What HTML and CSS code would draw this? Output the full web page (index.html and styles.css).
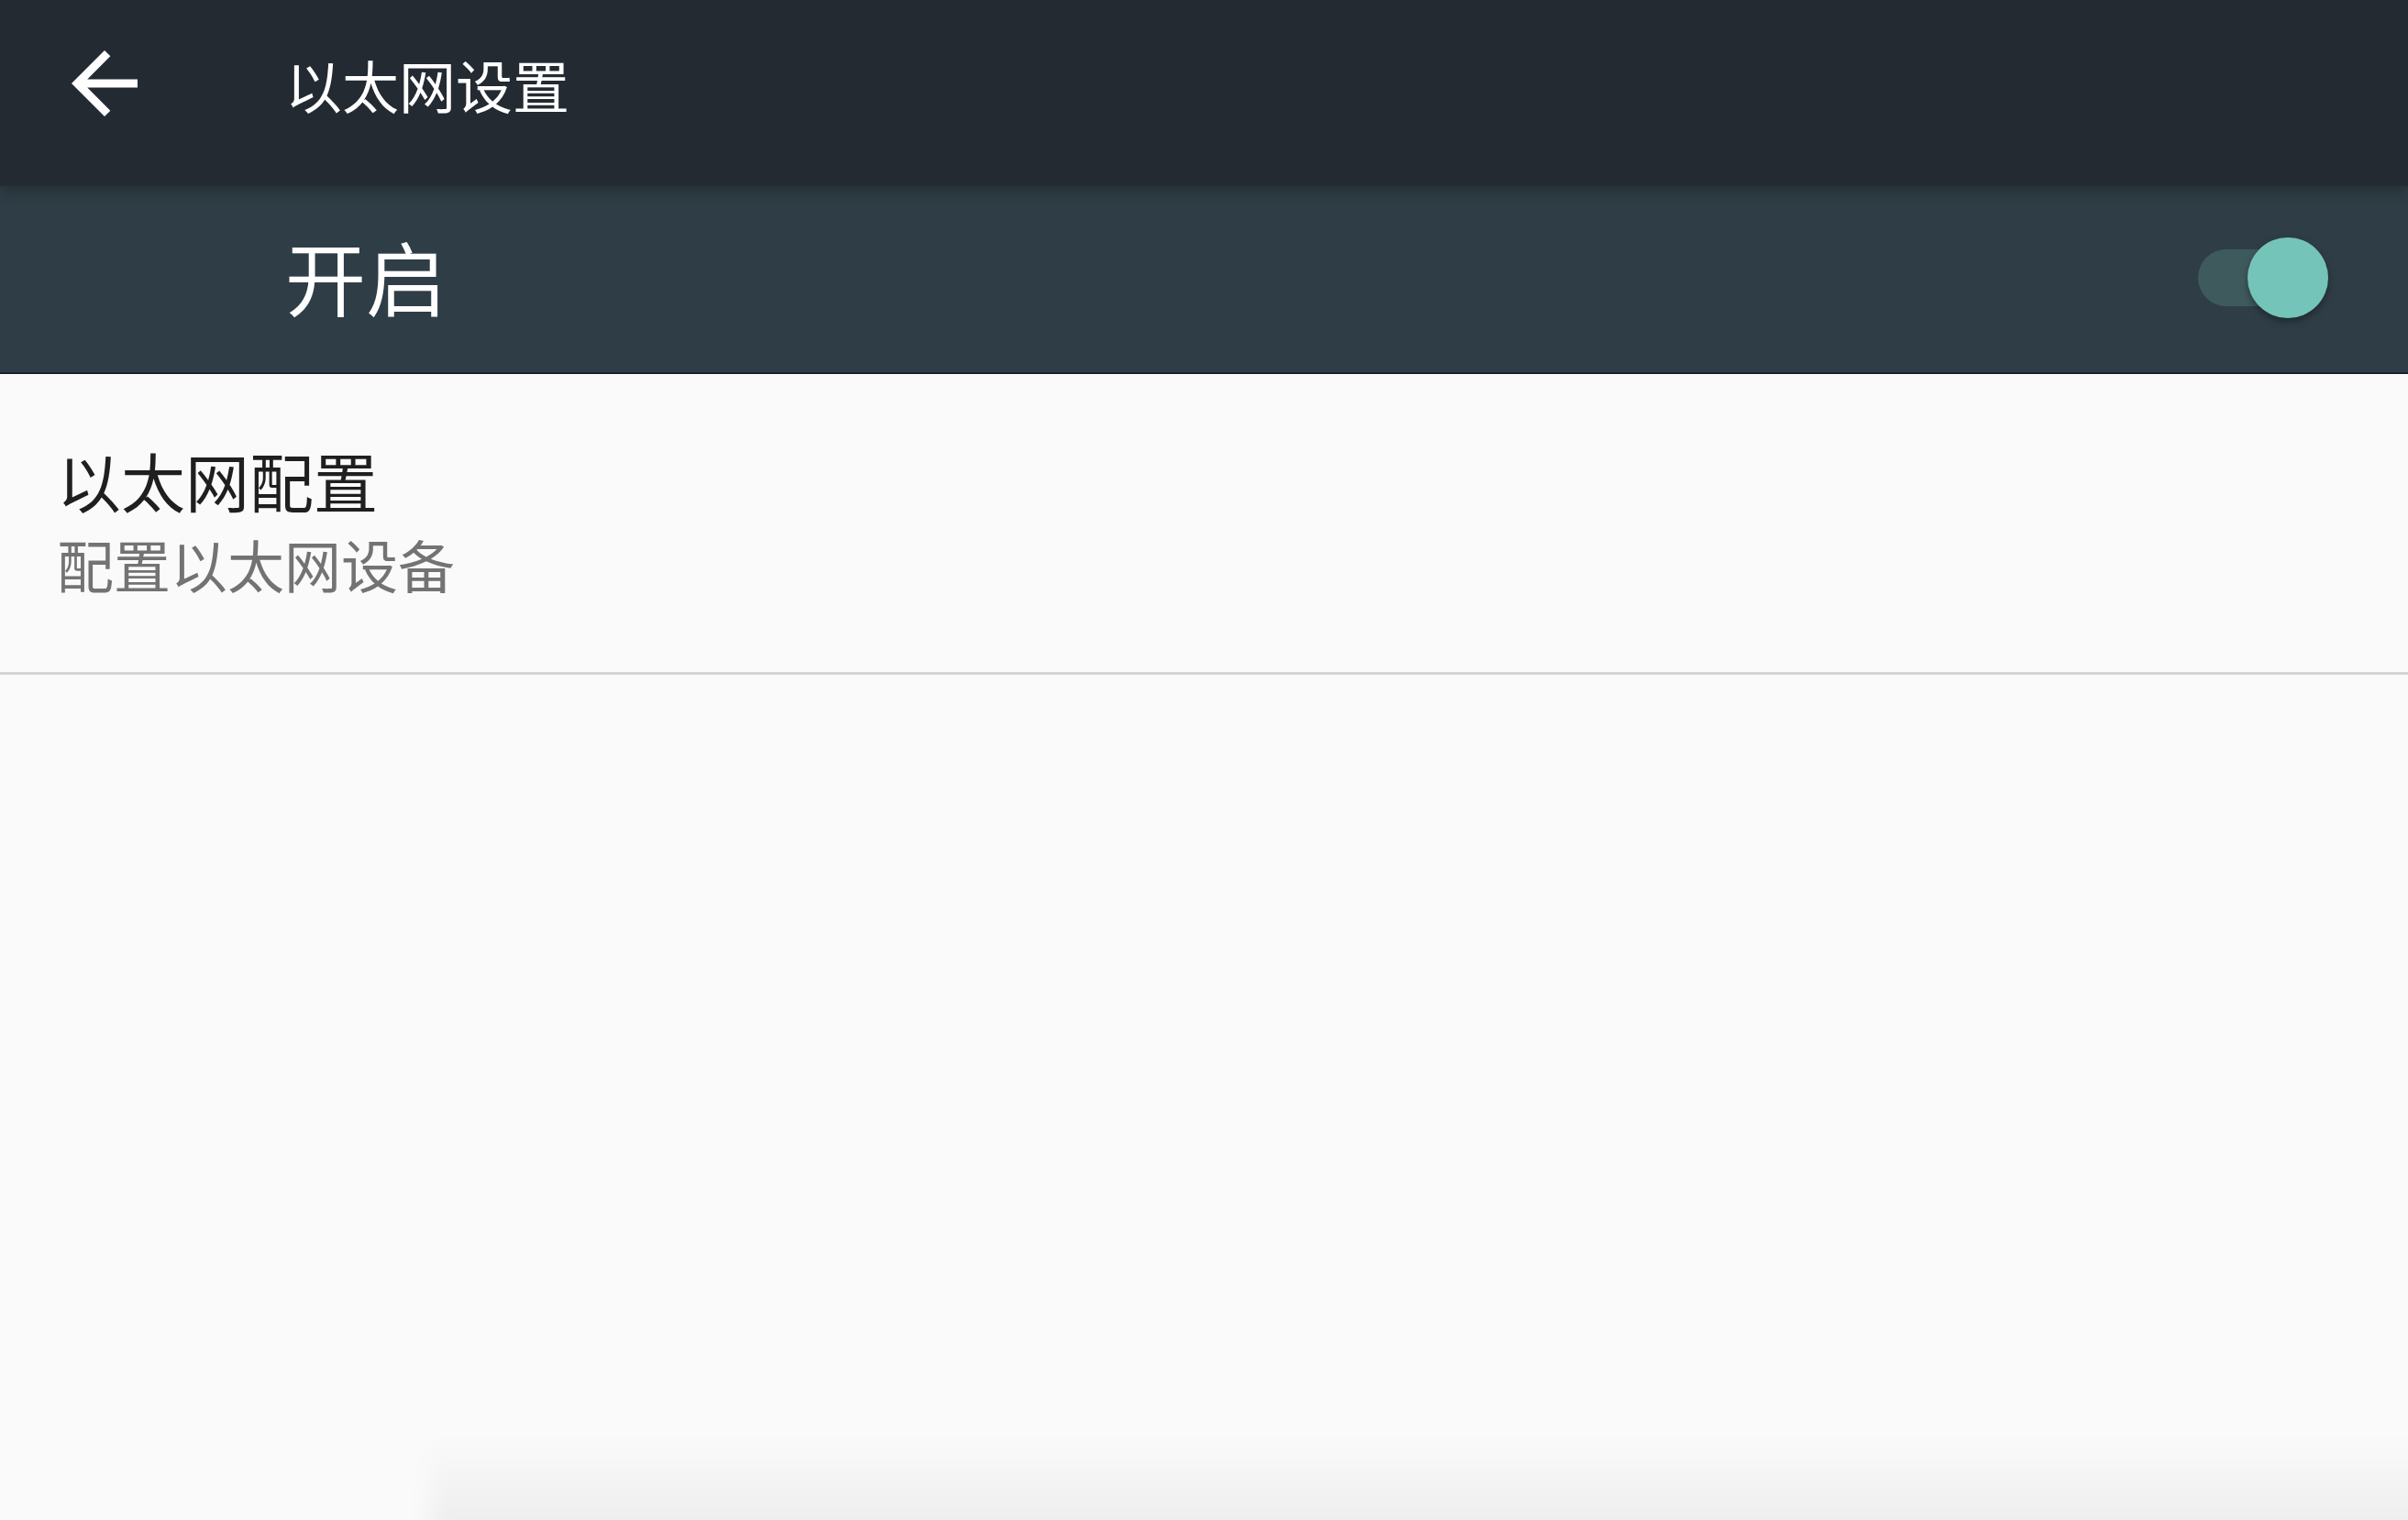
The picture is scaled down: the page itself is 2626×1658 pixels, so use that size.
FILE: index.html
```html
<!DOCTYPE html>
<html lang="zh-CN">
<head>
  <meta charset="UTF-8">
  <title>以太网设置</title>
  <link rel="stylesheet" href="styles.css">
</head>
<body>

  <!-- Toolbar -->
  <header class="toolbar">
    <svg class="back-icon" viewBox="0 0 24 24" width="108" height="108">
      <path fill="#fff" d="M20 11H7.83l5.59-5.59L12 4l-8 8 8 8 1.41-1.41L7.83 13H20v-2z"/>
    </svg>
    <h1 class="toolbar-title">以太网设置</h1>
  </header>

  <!-- Master switch -->
  <div class="switch-bar">
    <span class="switch-label">开启</span>
    <div class="switch">
      <span class="switch-thumb"></span>
    </div>
  </div>

  <ul class="prefs">
    <li class="pref-item">
      <div class="pref-title">以太网配置</div>
      <div class="pref-summary">配置以太网设备</div>
    </li>
  </ul>

  <div class="bottom-shade"></div>

</body>
</html>
```

FILE: styles.css
```css
html, body {
  height: 100%;
}

body {
  margin: 0;
  background: #fafafa;
  font-family: "Noto Sans CJK SC", "Noto Sans", sans-serif;
  overflow: hidden;
  position: relative;
}

.toolbar {
  height: 203px;
  background: #232a32;
  display: flex;
  align-items: center;
  padding-left: 60px;
  position: relative;
  z-index: 2;
  box-shadow: 0 6px 14px rgba(0, 0, 0, 0.25);
}

.back-icon {
  align-self: flex-start;
  margin-top: 37px;
  display: block;
}

.toolbar-title {
  margin: 0 0 20px 143px;
  font-size: 62px;
  font-weight: normal;
  line-height: 1;
  color: #fff;
}

.switch-bar {
  height: 203px;
  background: #2f3e46;
  border-bottom: 2px solid #1c1f2b;
  display: flex;
  align-items: center;
  justify-content: space-between;
  padding: 0 89px 0 311px;
  position: relative;
  z-index: 1;
}

.switch-label {
  margin-bottom: 10px;
  font-size: 88px;
  line-height: 1;
  color: #fff;
}

.switch {
  position: relative;
  width: 140px;
  height: 62px;
  margin-bottom: 4px;
  border-radius: 31px;
  background: #3f5a5d;
}

.switch-thumb {
  position: absolute;
  left: 54px;
  top: -13px;
  width: 88px;
  height: 88px;
  border-radius: 50%;
  background: #74c4ba;
  box-shadow: 0 4px 8px rgba(0, 0, 0, 0.35);
}

.prefs {
  list-style: none;
  margin: 0;
  padding: 0;
}

.pref-item {
  padding: 81px 0 87px 62px;
  border-bottom: 3px solid #d5d5d5;
}

.pref-title {
  font-size: 70px;
  line-height: 1;
  color: #1f1f1f;
}

.pref-summary {
  margin-top: 25px;
  font-size: 62px;
  line-height: 1;
  color: #737373;
}

.bottom-shade {
  position: absolute;
  left: 470px;
  right: -20px;
  bottom: -20px;
  height: 110px;
  background: linear-gradient(to bottom, rgba(0, 0, 0, 0), rgba(0, 0, 0, 0.06));
  filter: blur(12px);
}
```
